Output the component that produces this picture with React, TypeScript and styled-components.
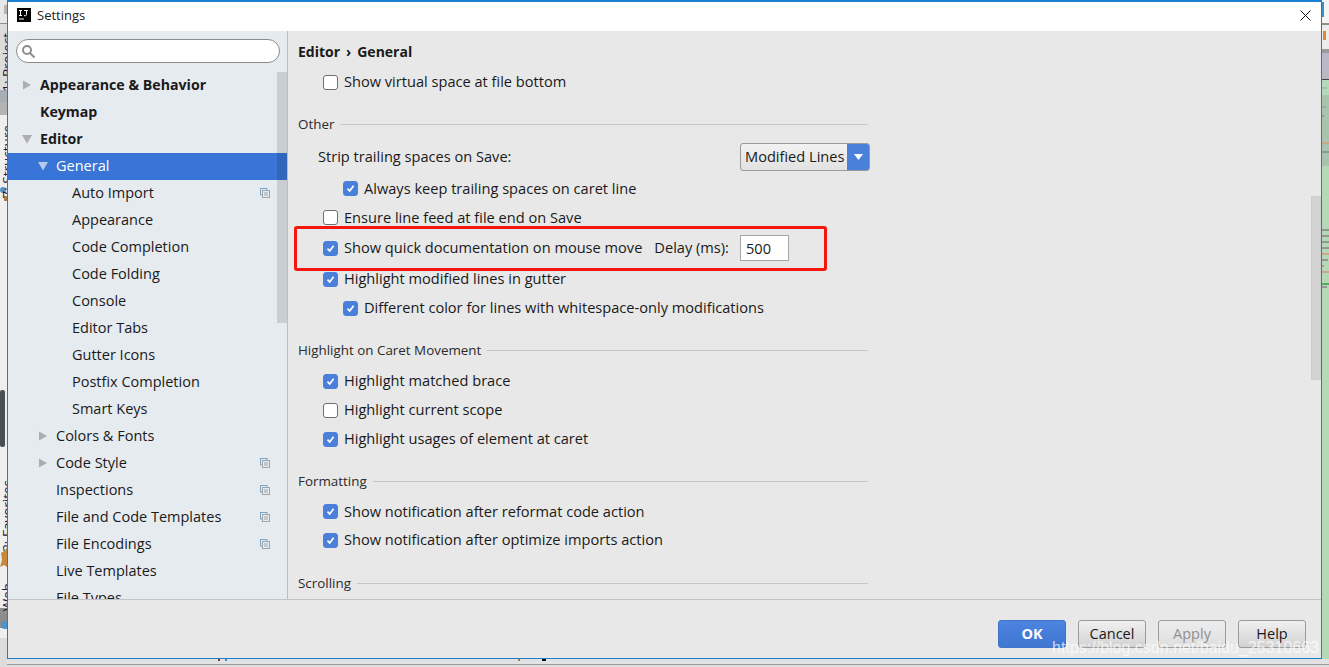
import React from "react";
import styled, { createGlobalStyle } from "styled-components";

const Global = createGlobalStyle`
  html, body { margin: 0; padding: 0; background: #e9e9e9; }
  * { box-sizing: border-box; }
`;
const FONT = `"Open Sans", "Noto Sans", "Liberation Sans", sans-serif`;

const Desktop = styled.div`
  width: 1329px; height: 667px; display: flex; overflow: hidden; position: relative;
  font-family: ${FONT}; font-size: 14.6px; color: #1a1a1a;
  background: linear-gradient(#e2e2e2 0 664px, #9c9c9c 664px 665px, #dedede 665px);
`;
const BottomMarks = styled.svg` position: absolute; left: 0; top: 659px; `;
const LeftStrip = styled.div`
  width: 7px; height: 100%; position: relative; overflow: hidden; flex: none;
  background: linear-gradient(#e8e8e8 0 23px, #8f8f8f 23px 24px, #dcdcdc 24px 90px, #a6aeb6 90px 102px, #b4b4b4 102px 115px, #efefef 115px 638px, #dcdcdc 638px);
`;
const StripLabel = styled.span<{ $top: number }>`
  position: absolute; top: ${p => p.$top}px; left: 1px;
  writing-mode: vertical-rl; transform: rotate(180deg);
  font-size: 13.500px; line-height: 13px; color: #26123a; white-space: nowrap;
`;
const StripArt = styled.svg` position: absolute; left: 0; top: 0; `;
const RightStrip = styled.div`
  flex: 1; height: 100%; display: flex; flex-direction: column; position: relative;
`;
const StripBand = styled.div<{ $h: number; $bg: string }>`
  height: ${p => p.$h}px; background: ${p => p.$bg}; flex: none;
`;
const Dialog = styled.div`
  width: 1315px; height: 659px; flex: none; display: flex; flex-direction: column;
  border: 1px solid #1b7fd0; border-top-width: 2px; background: #e8e8e8;
`;
const TitleBar = styled.div`
  height: 29px; flex: none; background: #fff; display: flex; align-items: center;
  padding: 0 10px 3px 9px; font-size: 13px; gap: 6px;
`;
const TitleText = styled.span` flex: 1; color: #222; `;
const Body = styled.div` flex: 1; min-height: 0; display: flex; `;
const Sidebar = styled.div`
  width: 280px; flex: none; background: #e6ebf0; border-right: 1px solid #bdbdbd;
  position: relative; overflow: hidden; display: flex; flex-direction: column;
`;
const SearchBox = styled.div`
  height: 24px; margin: 8px 7px 9px 8px; border: 1px solid #8b8b8b; border-radius: 12px;
  background: #fff; display: flex; align-items: center; padding-left: 4px; flex: none;
`;
const Tree = styled.div` display: flex; flex-direction: column; `;
const TreeRow = styled.div<{ $level: number; $selected?: boolean; $bold?: boolean }>`
  height: 27px; flex: none; display: flex; align-items: center; position: relative;
  padding: 0 17px 2px ${p => 32 + p.$level * 16}px;
  font-weight: ${p => (p.$bold ? 700 : 400)};
  font-size: ${p => (p.$bold ? "14.2px" : "14.5px")};
  background: ${p => (p.$selected ? "#3875d7" : "transparent")};
  color: ${p => (p.$selected ? "#fff" : "#1a1a1a")};
`;
const RowLabel = styled.span` flex: 1; white-space: nowrap; `;
const Arrow = styled.svg<{ $level: number }>`
  position: absolute; left: ${p => 14 + p.$level * 16}px; top: 8px;
`;
const SideThumb = styled.div`
  position: absolute; right: 0; top: 41px; width: 10px; height: 251px;
  background: rgba(0, 0, 0, 0.12);
`;
const Main = styled.div` flex: 1; min-width: 0; display: flex; `;
const Content = styled.div`
  flex: 1; min-width: 0; overflow: hidden; padding: 11px 0 0 10px; position: relative;
`;
const Crumb = styled.div`
  height: 20px; line-height: 20px; font-weight: 700; font-size: 14px; display: flex; gap: 6px;
`;
const Form = styled.div` width: 570px; display: flex; flex-direction: column; `;
const Row = styled.label<{ $top?: number; $indent?: number }>`
  display: flex; align-items: center; height: 20px; gap: 6px; white-space: nowrap;
  margin-top: ${p => p.$top ?? 9}px; padding-left: ${p => p.$indent ?? 25}px;
`;
const RowText = styled.span` position: relative; top: -1px; `;
const Section = styled.div<{ $top: number }>`
  display: flex; align-items: center; gap: 6px; height: 20px; font-size: 13.4px;
  margin-top: ${p => p.$top}px; color: #2b2b2b; white-space: nowrap;
  &::after { content: ""; flex: 1; height: 1px; background: #c6c6c6; }
`;
const Box = styled.span<{ $on?: boolean }>`
  width: 15px; height: 15px; border-radius: 3px; flex: none; display: flex;
  align-items: center; justify-content: center;
  background: ${p => (p.$on ? "#4a80da" : "#fff")};
  border: 1px solid ${p => (p.$on ? "#4a80da" : "#6f6f6f")};
`;
const StripRow = styled.div`
  display: flex; align-items: center; justify-content: space-between;
  height: 28px; margin-top: 9px; padding-left: 20px;
`;
const Select = styled.div`
  width: 130px; height: 28px; margin-right: -2px; display: flex; border: 1px solid #9a9a9a; border-radius: 3px;
  overflow: hidden; background: linear-gradient(#f2f2f2, #e2e2e2);
`;
const SelectValue = styled.span` flex: 1; padding-left: 4px; line-height: 25px; white-space: nowrap; overflow: hidden; `;
const SelectButton = styled.span`
  width: 22px; flex: none; background: #4a80da; display: flex; align-items: center; justify-content: center;
`;
const DelayLabel = styled.span` margin-left: 6px; `;
const DelayInput = styled.span`
  width: 49px; height: 26px; background: #fff; border: 1px solid #a6a6a6; line-height: 24px;
  padding-left: 5px; margin-left: 5px;
`;
const Annotation = styled.div`
  position: absolute; left: 6px; top: 195px; width: 533px; height: 45px;
  border: 3px solid #f5170d; border-radius: 3px;
`;
const Scroll = styled.div` width: 10px; flex: none; padding-top: 165px; `;
const ScrollThumb = styled.div` height: 184px; background: #d3d3d3; border: 1px solid #cdcdcd; `;
const Footer = styled.div`
  height: 59px; flex: none; border-top: 1px solid #c4c4c4; display: flex;
  justify-content: flex-end; gap: 12px; padding: 20px 15px 0 0; position: relative;
`;
const Btn = styled.div<{ $kind?: "primary" | "disabled" }>`
  width: 68px; height: 28px; border-radius: 3px; text-align: center; line-height: 26px; font-size: 14.5px;
  border: 1px solid ${p => (p.$kind === "primary" ? "#3f74c9" : "#9b9b9b")};
  color: ${p => (p.$kind === "primary" ? "#fff" : p.$kind === "disabled" ? "#8f8f8f" : "#1a1a1a")};
  font-weight: ${p => (p.$kind === "primary" ? 700 : 400)};
  background: ${p => p.$kind === "primary"
    ? "linear-gradient(#4d84e0, #3f76d2)"
    : p.$kind === "disabled" ? "linear-gradient(#ededed, #dedede)" : "linear-gradient(#f0f0f0, #d2d2d2)"};
`;
const Watermark = styled.span`
  position: absolute; right: 2px; bottom: 0; font-family: "Liberation Sans", sans-serif;
  font-size: 16px; line-height: 20px; color: rgba(255, 255, 255, 0.72); white-space: nowrap;
`;
const Close = styled.svg` flex: none; `;

const Check = () => (
  <svg width="11" height="11" viewBox="0 0 11 11"><path d="M2.500 5.600 4.700 8 8.600 2.800" fill="none" stroke="#fff" strokeWidth="1.700" /></svg>
);
const CheckItem = ({ on, children, ...rest }: { on?: boolean; children: React.ReactNode; $top?: number; $indent?: number }) => (
  <Row {...rest}><Box $on={on}>{on && <Check />}</Box>{children}</Row>
);
const CopyIcon = () => (
  <svg width="10" height="10" viewBox="0 0 10 10" style={{ flex: "none" }}>
    <rect x="0.500" y="0.500" width="6.500" height="6.500" fill="none" stroke="#7aa5c4" />
    <rect x="2.500" y="2.500" width="7" height="7" fill="#e6ebf0" stroke="#a0a5a9" />
    <path d="M4 5h4M4 7h4" stroke="#a0a5a9" />
  </svg>
);

type Node = { t: string; l: number; b?: boolean; s?: boolean; a?: "r" | "d"; c?: boolean };
const nodes: Node[] = [
  { t: "Appearance & Behavior", l: 0, b: true, a: "r" },
  { t: "Keymap", l: 0, b: true },
  { t: "Editor", l: 0, b: true, a: "d" },
  { t: "General", l: 1, s: true, a: "d" },
  { t: "Auto Import", l: 2, c: true },
  { t: "Appearance", l: 2 },
  { t: "Code Completion", l: 2 },
  { t: "Code Folding", l: 2 },
  { t: "Console", l: 2 },
  { t: "Editor Tabs", l: 2 },
  { t: "Gutter Icons", l: 2 },
  { t: "Postfix Completion", l: 2 },
  { t: "Smart Keys", l: 2 },
  { t: "Colors & Fonts", l: 1, a: "r" },
  { t: "Code Style", l: 1, a: "r", c: true },
  { t: "Inspections", l: 1, c: true },
  { t: "File and Code Templates", l: 1, c: true },
  { t: "File Encodings", l: 1, c: true },
  { t: "Live Templates", l: 1 },
  { t: "File Types", l: 1 },
];

const marks: [number, string, number][] = [
  [87, "#a3bfa8", 5], [106, "#98b09e", 4], [115, "#8f9f94", 2], [142, "#c7a98a", 7], [151, "#8c9a90", 7],
  [229, "#8c9a90", 7], [235, "#8c9a90", 7], [241, "#8c9a90", 7], [247, "#8c9a90", 7], [253, "#c7a98a", 7],
  [259, "#8c9a90", 6], [265, "#a89a80", 2], [271, "#c7a98a", 7], [283, "#58a86a", 7], [286, "#8c9a90", 5],
];

export default function App() {
  return (
    <Desktop>
      <Global />
      <LeftStrip>
        <StripArt width="7" height="667" viewBox="0 0 7 667">
          <rect x="4" y="5" width="3" height="9" fill="#b5b5b5" />
          <rect x="0" y="390" width="5" height="57" rx="2" fill="#4a4f56" />
          <path d="M1 553 4 551 7 548V567L4 565 0 567 2 560Z" fill="#c88a3a" />
          <circle cx="3" cy="190" r="3" fill="#5a90c0" />
          <rect x="4" y="196" width="3" height="5" fill="#b07a50" />
          <rect x="0" y="608" width="7" height="20" fill="#8d8d8d" />
          <circle cx="5" cy="625" r="4" fill="#4f93c9" />
        </StripArt>
        <StripLabel $top={33}>1: Project</StripLabel>
        <StripLabel $top={125}>7: Structure</StripLabel>
        <StripLabel $top={480}>2: Favorites</StripLabel>
        <StripLabel $top={583}>Web</StripLabel>
      </LeftStrip>
      <Dialog>
        <TitleBar>
          <svg width="14" height="14" viewBox="0 0 14 14" style={{ flex: "none" }}>
            <rect width="14" height="14" fill="#000" />
            <path d="M2 2.500h3M3.500 2.500v5M2 7.500h3M7 2.500h4M9.500 2.500v4q0 1.200-1.200 1.200H7M2 11h5" stroke="#fff" fill="none" />
          </svg>
          <TitleText>Settings</TitleText>
          <Close width="11" height="11" viewBox="0 0 11 11"><path d="M.5.5l10 10M10.500.5l-10 10" stroke="#111" /></Close>
        </TitleBar>
        <Body>
          <Sidebar>
            <SearchBox>
              <svg width="15" height="15" viewBox="0 0 15 15"><circle cx="6" cy="6" r="4" fill="none" stroke="#8d8d8d" strokeWidth="2" /><path d="M9 9l4.500 4.500" stroke="#8d8d8d" strokeWidth="2" /></svg>
            </SearchBox>
            <Tree>
              {nodes.map(n => (
                <TreeRow key={n.t} $level={n.l} $selected={n.s} $bold={n.b}>
                  {n.a && (
                    <Arrow $level={n.l} width="10" height="10" viewBox="0 0 10 10">
                      <path d={n.a === "r" ? "M1 0.500 9 5 1 9.500z" : "M0 1h10L5 9.500z"} fill={n.s ? "#b9c9e8" : "#adadad"} />
                    </Arrow>
                  )}
                  <RowLabel>{n.t}</RowLabel>
                  {n.c && <CopyIcon />}
                </TreeRow>
              ))}
            </Tree>
            <SideThumb />
          </Sidebar>
          <Main>
            <Content>
              <Crumb><span>Editor</span><span>›</span><span>General</span></Crumb>
              <Form>
                <CheckItem $top={10}><RowText>Show virtual space at file bottom</RowText></CheckItem>
                <Section $top={22}>Other</Section>
                <StripRow><RowText>Strip trailing spaces on Save:</RowText>
                  <Select><SelectValue>Modified Lines</SelectValue><SelectButton><svg width="9" height="6" viewBox="0 0 9 6"><path d="M0 0h9L4.500 6z" fill="#fff" /></svg></SelectButton></Select>
                </StripRow>
                <CheckItem on $top={7} $indent={45}>Always keep trailing spaces on caret line</CheckItem>
                <CheckItem $top={9}>Ensure line feed at file end on Save</CheckItem>
                <CheckItem on $top={11}><RowText>Show quick documentation on mouse move</RowText><DelayLabel><RowText>Delay (ms):</RowText></DelayLabel><DelayInput>500</DelayInput></CheckItem>
                <CheckItem on $top={11}><RowText>Highlight modified lines in gutter</RowText></CheckItem>
                <CheckItem on $top={9} $indent={45}><RowText>Different color for lines with whitespace-only modifications</RowText></CheckItem>
                <Section $top={22}>Highlight on Caret Movement</Section>
                <CheckItem on $top={11}><RowText>Highlight matched brace</RowText></CheckItem>
                <CheckItem><RowText>Highlight current scope</RowText></CheckItem>
                <CheckItem on><RowText>Highlight usages of element at caret</RowText></CheckItem>
                <Section $top={22}>Formatting</Section>
                <CheckItem on $top={10}>Show notification after reformat code action</CheckItem>
                <CheckItem on><RowText>Show notification after optimize imports action</RowText></CheckItem>
                <Section $top={23}>Scrolling</Section>
              </Form>
              <Annotation />
            </Content>
            <Scroll><ScrollThumb /></Scroll>
          </Main>
        </Body>
        <Footer>
          <Btn $kind="primary">OK</Btn>
          <Btn>Cancel</Btn>
          <Btn $kind="disabled">Apply</Btn>
          <Btn>Help</Btn>
          <Watermark>https://blog.csdn.net/baidu_25310663</Watermark>
        </Footer>
      </Dialog>
      <RightStrip>
        <StripBand $h={23} $bg="#f4f4f4" />
        <StripBand $h={2} $bg="#8f8f8f" />
        <StripBand $h={24} $bg="#ececec" />
        <StripBand $h={4} $bg="#9a9a9a" />
        <StripBand $h={26} $bg="#b9b9c6" />
        <StripBand $h={1} $bg="#444" />
        <StripBand $h={15} $bg="#b5d9b8" />
        <StripBand $h={71} $bg="#a9c4ae" />
        <StripBand $h={493} $bg="#b5d9b8" />
        <StripArt width="7" height="667" viewBox="0 0 7 667">
          <rect x="0" y="2" width="2" height="15" fill="#3d8dc4" />
          <rect x="1" y="31" width="3" height="9" fill="#d98a3a" />
          {marks.map(([y, c, w]) => <rect key={y} x="0" y={y} width={w} height="2" fill={c} />)}
        </StripArt>
      </RightStrip>
      <BottomMarks width="560" height="4" viewBox="0 0 560 4">
        <rect x="218" y="0" width="2" height="2" fill="#8a3a2a" />
        <rect x="225" y="0" width="2" height="2" fill="#3d8dc4" />
        <rect x="518" y="0" width="2" height="2" fill="#a8843a" />
        <rect x="542" y="0" width="4" height="2" fill="#111" />
      </BottomMarks>
    </Desktop>
  );
}
